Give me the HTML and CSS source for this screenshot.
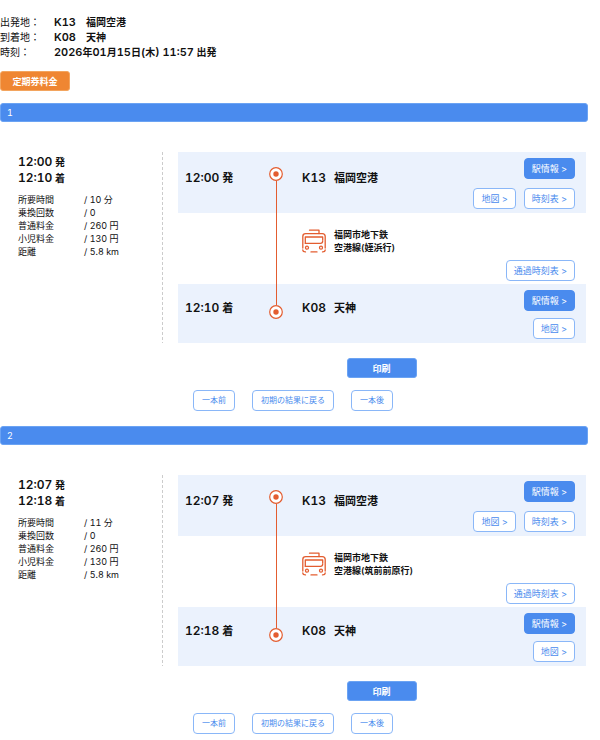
FILE: index.html
```html
<!DOCTYPE html>
<html lang="ja">
<head>
<meta charset="utf-8">
<meta name="viewport" content="width=device-width, initial-scale=1">
<title>福岡空港 → 天神</title>
<link rel="stylesheet" href="styles.css">
</head>
<body>
<svg class="symbols" aria-hidden="true">
  <symbol id="stop" viewBox="0 0 14 14">
    <circle cx="7" cy="7" r="6.3" fill="#fff" stroke="currentColor" stroke-width="1.2"/>
    <circle cx="7" cy="7" r="2.7" fill="currentColor"/>
  </symbol>
  <symbol id="train" viewBox="0 0 24 24">
    <g fill="none" stroke="currentColor" stroke-width="1.3" stroke-linecap="round" stroke-linejoin="round">
      <path d="M7.5 1.2H17V4.5"/>
      <path d="M.8 19V7.5Q.8 4.6 3.7 4.6H20.3Q23.2 4.6 23.2 7.5V19"/>
      <path d="M3.3 14.3V8H20.7V11"/>
      <path d="M3.3 14.3H18.5Q20.7 14.3 20.7 12"/>
      <circle cx="5" cy="18.7" r="1.5"/>
      <circle cx="19" cy="18.7" r="1.5"/>
      <path d="M.8 21Q.9 22.9 3.5 22.9M9 22.9H15M20.5 22.9Q23.1 22.9 23.2 21"/>
    </g>
  </symbol>
</svg>
<main class="page">
  <dl class="query">
    <dt>出発地：</dt><dd><span class="num">K13</span>　福岡空港</dd>
    <dt>到着地：</dt><dd><span class="num">K08</span>　天神</dd>
    <dt>時刻：</dt><dd><span class="num">2026</span>年<span class="num">01</span>月<span class="num">15</span>日<span class="num">(</span>木<span class="num">) 11:57</span> 出発</dd>
  </dl>
  <button class="pass" type="button">定期券料金</button>

  <section class="result">
    <h2 class="bar">1</h2>
    <div class="detail">
      <div class="summary">
        <p class="times"><span class="num">12:00</span> 発<br><span class="num">12:10</span> 着</p>
        <table class="facts">
          <tr><th>所要時間</th><td>/ 10 分</td></tr>
          <tr><th>乗換回数</th><td>/ 0</td></tr>
          <tr><th>普通料金</th><td>/ 260 円</td></tr>
          <tr><th>小児料金</th><td>/ 130 円</td></tr>
          <tr><th>距離</th><td>/ 5.8 km</td></tr>
        </table>
      </div>
      <div class="route">
        <div class="stop first">
          <div class="time"><span class="num">12:00</span> 発</div>
          <div class="rail"><svg class="dot"><use href="#stop"/></svg><i class="line"></i></div>
          <div class="name"><span class="num">K13</span><span>福岡空港</span></div>
          <div class="links"><a class="link solid" href="#">駅情報 &gt;</a><div class="pair"><a class="link" href="#">地図 &gt;</a><a class="link" href="#">時刻表 &gt;</a></div></div>
        </div>
        <div class="ride">
          <div class="rail"><i class="line"></i></div>
          <div class="train"><svg class="icon"><use href="#train"/></svg><p>福岡市地下鉄<br>空港線(姪浜行)</p></div>
          <a class="link" href="#">通過時刻表 &gt;</a>
        </div>
        <div class="stop last">
          <div class="time"><span class="num">12:10</span> 着</div>
          <div class="rail"><i class="line"></i><svg class="dot"><use href="#stop"/></svg></div>
          <div class="name"><span class="num">K08</span><span>天神</span></div>
          <div class="links"><a class="link solid" href="#">駅情報 &gt;</a><a class="link" href="#">地図 &gt;</a></div>
        </div>
      </div>
    </div>
    <div class="actions">
      <button class="print" type="button">印刷</button>
      <div class="shift"><button type="button">一本前</button><button type="button">初期の結果に戻る</button><button type="button">一本後</button></div>
    </div>
  </section>

  <section class="result">
    <h2 class="bar">2</h2>
    <div class="detail">
      <div class="summary">
        <p class="times"><span class="num">12:07</span> 発<br><span class="num">12:18</span> 着</p>
        <table class="facts">
          <tr><th>所要時間</th><td>/ 11 分</td></tr>
          <tr><th>乗換回数</th><td>/ 0</td></tr>
          <tr><th>普通料金</th><td>/ 260 円</td></tr>
          <tr><th>小児料金</th><td>/ 130 円</td></tr>
          <tr><th>距離</th><td>/ 5.8 km</td></tr>
        </table>
      </div>
      <div class="route">
        <div class="stop first">
          <div class="time"><span class="num">12:07</span> 発</div>
          <div class="rail"><svg class="dot"><use href="#stop"/></svg><i class="line"></i></div>
          <div class="name"><span class="num">K13</span><span>福岡空港</span></div>
          <div class="links"><a class="link solid" href="#">駅情報 &gt;</a><div class="pair"><a class="link" href="#">地図 &gt;</a><a class="link" href="#">時刻表 &gt;</a></div></div>
        </div>
        <div class="ride">
          <div class="rail"><i class="line"></i></div>
          <div class="train"><svg class="icon"><use href="#train"/></svg><p>福岡市地下鉄<br>空港線(筑前前原行)</p></div>
          <a class="link" href="#">通過時刻表 &gt;</a>
        </div>
        <div class="stop last">
          <div class="time"><span class="num">12:18</span> 着</div>
          <div class="rail"><i class="line"></i><svg class="dot"><use href="#stop"/></svg></div>
          <div class="name"><span class="num">K08</span><span>天神</span></div>
          <div class="links"><a class="link solid" href="#">駅情報 &gt;</a><a class="link" href="#">地図 &gt;</a></div>
        </div>
      </div>
    </div>
    <div class="actions">
      <button class="print" type="button">印刷</button>
      <div class="shift"><button type="button">一本前</button><button type="button">初期の結果に戻る</button><button type="button">一本後</button></div>
    </div>
  </section>
</main>
</body>
</html>
```
FILE: styles.css
```css
* { box-sizing: border-box; }
body {
  margin: 0;
  background: #fff;
  color: #111;
  font: 10px/15px Inter, "Noto Sans CJK JP", sans-serif;
  font-variant-numeric: tabular-nums;
}
p, dl, dd, h2 { margin: 0; }
button { font: inherit; cursor: pointer; }
.symbols { display: none; }
.page { padding: 15px 12px 0 0; }

.query {
  display: grid;
  grid-template-columns: 54px 1fr;
  grid-auto-rows: 15px;
}
.query dd { font-weight: 600; white-space: nowrap; }
.num { font-size: 12px; }
.query .num { font-size: 11px; }

.pass {
  display: block;
  width: 70px;
  height: 20px;
  margin: 11px 0 12px;
  padding: 0;
  border: 1px solid #f3a55f;
  border-radius: 3px;
  background: #ef8632;
  color: #fff;
  font-size: 9px;
  font-weight: 700;
}

.bar {
  height: 19px;
  padding: 0 6px;
  border: 1px solid #6ba3f3;
  border-radius: 3px;
  background: #4a8bee;
  color: #fff;
  font-size: 9px;
  font-weight: 400;
  line-height: 17px;
}
.detail {
  display: grid;
  grid-template-columns: 163px 1fr;
  column-gap: 15px;
  padding: 30px 2px 0 0;
}
.summary {
  padding: 2px 0 0 18px;
  background: repeating-linear-gradient(#ccc 0 3px, transparent 3px 5px) right / 1px 100% no-repeat;
}
.times { font-size: 10px; font-weight: 600; }
.facts {
  margin-top: 7px;
  border-collapse: collapse;
  font-size: 9px;
  line-height: 13px;
}
.facts th, .facts td { padding: 0; text-align: left; font-weight: 400; }
.facts th { width: 66px; }

.stop, .ride {
  display: grid;
  grid-template-columns: 84px 29px 1fr auto;
  padding: 0 11px 0 7px;
}
.stop { background: #ebf2fd; }
.first { height: 61px; }
.last { height: 59px; }
.ride { height: 71px; }
.time, .name { padding-top: 18px; font-size: 11px; font-weight: 600; }
.last .time, .last .name { padding-top: 16px; }
.name {
  display: flex;
  align-items: baseline;
  align-self: start;
  gap: 8px;
  padding-left: 4px;
}
.rail {
  grid-column: 2;
  justify-self: start;
  width: 14px;
  display: flex;
  flex-direction: column;
  align-items: center;
  color: #e35d30;
}
.dot { flex: none; width: 14px; height: 14px; overflow: visible; }
.line { flex: 1; width: 1px; background: currentColor; }
.first .rail { padding-top: 15px; }
.last .rail { padding-bottom: 24px; }
.train {
  display: flex;
  gap: 8px;
  padding: 15px 0 0 4px;
  font-size: 9px;
  font-weight: 600;
  line-height: 13px;
  white-space: nowrap;
}
.icon { width: 24px; height: 24px; margin-top: 1px; color: #e35d30; }

.links {
  display: flex;
  flex-direction: column;
  align-items: flex-end;
  gap: 9px;
  padding-top: 6px;
}
.last .links { gap: 7px; }
.pair { display: flex; gap: 8px; }
.link {
  height: 21px;
  padding: 0 7px;
  border: 1px solid #8ab7f8;
  border-radius: 4px;
  background: #fff;
  color: #4a8bee;
  font-size: 9px;
  line-height: 19px;
  text-decoration: none;
  white-space: nowrap;
}
.link.solid { background: #4a8bee; border-color: #4a8bee; color: #fff; }
.ride .link { align-self: end; margin-bottom: 3px; }

.actions { padding: 15px 0 15px 175px; }
.print {
  display: block;
  width: 70px;
  height: 20px;
  margin: 0 auto;
  padding: 0;
  border: 1px solid #6ba3f3;
  border-radius: 3px;
  background: #4a8bee;
  color: #fff;
  font-size: 9px;
  font-weight: 700;
}
.shift { display: flex; gap: 17px; padding: 12px 0 0 18px; }
.shift button {
  height: 21px;
  padding: 0 8px;
  border: 1px solid #8ab7f8;
  border-radius: 4px;
  background: #fff;
  color: #4a8bee;
  font-size: 8px;
  white-space: nowrap;
}
```
